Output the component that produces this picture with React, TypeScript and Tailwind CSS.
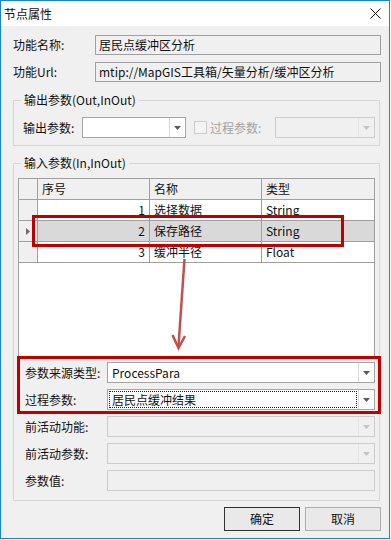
import React from "react";

const rows = [
  { no: 1, name: "选择数据", type: "String" },
  { no: 2, name: "保存路径", type: "String", selected: true },
  { no: 3, name: "缓冲半径", type: "Float" },
];

function DropArrow({ disabled }: { disabled?: boolean }) {
  return (
    <svg width="7" height="4" viewBox="0 0 7 4">
      <polygon points="0,0 7,0 3.5,4" fill={disabled ? "#c4c4c4" : "#5a5a5a"} />
    </svg>
  );
}

function Combo({
  className,
  value,
  disabled,
  focused,
}: {
  className?: string;
  value?: string;
  disabled?: boolean;
  focused?: boolean;
}) {
  return (
    <div
      className={`flex h-[21px] border ${
        disabled ? "border-[#cccccc] bg-[#f0f0f0]" : "border-[#a5a5a5] bg-white"
      } ${className ?? ""}`}
    >
      <div className="flex min-w-0 flex-1 items-center p-px">
        {focused ? (
          <div className="flex h-full w-full items-center border border-dotted border-[#222] pl-[2px]">
            {value}
          </div>
        ) : (
          <span className="pl-[3px]">{value}</span>
        )}
      </div>
      <div
        className={`flex w-[16px] items-center justify-center border-l ${
          disabled ? "border-[#e3e3e3]" : "border-[#dadada]"
        }`}
      >
        <DropArrow disabled={disabled} />
      </div>
    </div>
  );
}

function FormRow({ label, children }: { label: string; children: React.ReactNode }) {
  return (
    <div className="flex h-[21px] items-center">
      <span className="w-[82px] shrink-0">{label}</span>
      {children}
    </div>
  );
}

export default function App() {
  return (
    <div className="relative h-[540px] w-[391px] bg-white font-['Noto_Sans_CJK_SC','Noto_Sans',sans-serif] text-[12px] leading-[16px] text-[#111]">
      <div className="flex h-[539px] w-[390px] flex-col border border-[#1883d7]">
        {/* Title bar */}
        <div className="flex h-[25px] shrink-0 items-center justify-between bg-white pl-[3px] pr-[8px]">
          <span>节点属性</span>
          <svg width="11" height="11" viewBox="0 0 11 11">
            <path d="M0.5 0.5 L10.5 10.5 M10.5 0.5 L0.5 10.5" stroke="#111" strokeWidth="1" />
          </svg>
        </div>

        {/* Body */}
        <div className="flex flex-1 flex-col bg-[#f0f0f0]">
          <div className="ml-[12px] mr-[8px] mt-[9px] flex h-[20px] items-center">
            <span className="w-[82px] shrink-0">功能名称:</span>
            <div className="flex h-full flex-1 items-center border border-[#a0a0a0] pl-[3px]">
              居民点缓冲区分析
            </div>
          </div>
          <div className="ml-[12px] mr-[8px] mt-[7px] flex h-[20px] items-center">
            <span className="w-[82px] shrink-0">功能Url:</span>
            <div className="flex h-full flex-1 items-center border border-[#a0a0a0] pl-[3px]">
              mtip://MapGIS工具箱/矢量分析/缓冲区分析
            </div>
          </div>

          {/* Output group */}
          <fieldset className="ml-[12px] mr-[9px] mt-[10px] border border-[#d5d5d5]">
            <legend className="ml-[7px] px-[3px] leading-[16px]">输出参数(Out,InOut)</legend>
            <div className="mb-[7px] mt-[9px] flex h-[21px] items-center pl-[9px]">
              <span className="w-[59px] shrink-0">输出参数:</span>
              <Combo className="w-[104px]" />
              <div className="ml-[8px] h-[13px] w-[13px] border border-[#cccccc] bg-[#f4f4f4]" />
              <span className="ml-[3px] w-[65px] text-[#a2a2a2]">过程参数:</span>
              <Combo className="w-[100px]" disabled />
            </div>
          </fieldset>

          {/* Input group */}
          <fieldset className="ml-[12px] mr-[9px] mt-[9px] border border-[#d5d5d5]">
            <legend className="ml-[7px] px-[3px] leading-[16px]">输入参数(In,InOut)</legend>
            <div className="mx-[4px] mt-[7px] h-[180px] border border-[#a0a0a0] bg-white">
              <div className="flex h-[21px] border-b border-[#a0a0a0] bg-[#f0f0f0]">
                <div className="w-[19px] border-r border-[#a0a0a0]" />
                <div className="flex w-[112px] items-center border-r border-[#a0a0a0] pl-[4px]">序号</div>
                <div className="flex w-[112px] items-center border-r border-[#a0a0a0] pl-[4px]">名称</div>
                <div className="flex flex-1 items-center pl-[4px]">类型</div>
              </div>
              {rows.map((r) => (
                <div key={r.no} className="flex h-[21px] border-b border-[#a0a0a0]">
                  <div className="flex w-[19px] items-center justify-center border-r border-[#a0a0a0] bg-[#f0f0f0]">
                    {r.selected && (
                      <svg width="4" height="7" viewBox="0 0 4 7">
                        <polygon points="0,0 4,3.5 0,7" fill="#6b6b6b" />
                      </svg>
                    )}
                  </div>
                  <div
                    className={`flex flex-1 ${r.selected ? "bg-[#d9d9d9]" : "bg-white"}`}
                  >
                    <div className="flex w-[112px] items-center justify-end border-r border-[#a0a0a0] pr-[4px]">
                      {r.no}
                    </div>
                    <div className="flex w-[112px] items-center border-r border-[#a0a0a0] pl-[4px]">
                      {r.name}
                    </div>
                    <div className="flex flex-1 items-center pl-[4px]">{r.type}</div>
                  </div>
                </div>
              ))}
            </div>

            <div className="mb-[9px] ml-[11px] mr-[4px] mt-[4px] flex flex-col gap-[6px]">
              <FormRow label="参数来源类型:">
                <Combo className="flex-1" value="ProcessPara" />
              </FormRow>
              <FormRow label="过程参数:">
                <Combo className="flex-1" value="居民点缓冲结果" focused />
              </FormRow>
              <FormRow label="前活动功能:">
                <Combo className="flex-1" disabled />
              </FormRow>
              <FormRow label="前活动参数:">
                <Combo className="flex-1" disabled />
              </FormRow>
              <FormRow label="参数值:">
                <div className="h-full flex-1 border border-[#cccccc] bg-[#f0f0f0]" />
              </FormRow>
            </div>
          </fieldset>

          {/* Buttons */}
          <div className="mr-[8px] mt-[6px] flex justify-end gap-[5px]">
            <button className="flex h-[24px] w-[76px] items-center justify-center border border-[#333333] bg-[#e9e9e9]">
              确定
            </button>
            <button className="flex h-[24px] w-[76px] items-center justify-center border border-[#adadad] bg-[#e9e9e9]">
              取消
            </button>
          </div>
        </div>
      </div>

      {/* Annotations */}
      <div className="pointer-events-none absolute left-[32px] top-[215px] h-[32px] w-[312px] border-[3px] border-[#c00000]" />
      <div className="pointer-events-none absolute left-[17px] top-[356px] h-[58px] w-[364px] border-[3px] border-[#c00000]" />
      <svg className="pointer-events-none absolute left-0 top-0" width="391" height="540">
        <path d="M184.5 259 L178.5 346" stroke="#c0504d" strokeWidth="2.5" fill="none" />
        <polyline
          points="172.5,335 178.5,348 185,336"
          stroke="#c0504d"
          strokeWidth="2.5"
          fill="none"
          strokeLinejoin="miter"
        />
      </svg>
    </div>
  );
}
